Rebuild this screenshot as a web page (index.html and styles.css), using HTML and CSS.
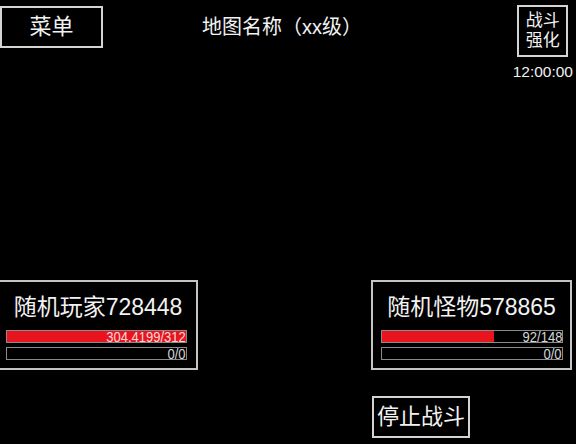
FILE: index.html
```html
<!DOCTYPE html>
<html lang="zh">
<head>
<meta charset="utf-8">
<title>战斗</title>
<link rel="stylesheet" href="styles.css">
</head>
<body>
<div class="screen">
  <div class="top">
    <div class="box menu">菜单</div>
    <div class="title">地图名称（xx级）</div>
    <div class="side">
      <div class="box boost">战斗<br>强化</div>
      <div class="time">12:00:00</div>
    </div>
  </div>
  <div class="panels">
    <div class="panel panel-left">
      <div class="name">随机玩家728448</div>
      <div class="bar"><div class="fill" style="width:100%"></div><span class="val">304.4199/312</span></div>
      <div class="bar bar-mp"><div class="fill" style="width:0%"></div><span class="val">0/0</span></div>
    </div>
    <div class="panel panel-right">
      <div class="name">随机怪物578865</div>
      <div class="bar"><div class="fill" style="width:62.16%"></div><span class="val">92/148</span></div>
      <div class="bar bar-mp"><div class="fill" style="width:0%"></div><span class="val">0/0</span></div>
    </div>
  </div>
  <div class="actions">
    <div class="box stop">停止战斗</div>
  </div>
</div>
</body>
</html>
```

FILE: styles.css
```css
* { box-sizing: border-box; }
html, body { margin: 0; padding: 0; background: #000; }
body {
  font-family: "Liberation Sans", "Noto Sans CJK SC", sans-serif;
  color: #f2f2f2;
}
.screen {
  width: 576px;
  height: 444px;
  overflow: hidden;
  display: flex;
  flex-direction: column;
}
.top {
  display: flex;
  align-items: flex-start;
}
.box {
  border: 2px solid #d4d4d4;
  display: flex;
  align-items: center;
  justify-content: center;
  text-align: center;
}
.menu {
  margin-top: 6px;
  width: 103px;
  height: 42px;
  font-size: 22px;
  line-height: 26px;
}
.title {
  margin-left: 99px;
  margin-top: 15px;
  font-size: 20px;
  line-height: 24px;
  white-space: nowrap;
}
.side {
  margin-left: auto;
  margin-right: 3px;
  margin-top: 5px;
  display: flex;
  flex-direction: column;
  align-items: center;
}
.boost {
  width: 51px;
  height: 52px;
  font-size: 17px;
  line-height: 20px;
}
.time {
  margin-top: 7px;
  font-size: 15.5px;
  line-height: 15px;
}
.panels {
  margin-top: auto;
  display: flex;
}
.panel {
  border: 2px solid #c4c4c4;
  height: 90px;
  padding-top: 12px;
}
.panel-left {
  width: 200px;
  margin-left: -2px;
  padding-left: 6px;
}
.panel-right {
  width: 201px;
  margin-left: auto;
  margin-right: 4px;
  padding-left: 8px;
}
.name {
  font-size: 23px;
  line-height: 26px;
  text-align: center;
  white-space: nowrap;
}
.panel-left .name { margin-left: -6px; width: 196px; }
.panel-right .name { margin-left: -8px; width: 197px; }
.bar {
  position: relative;
  margin-top: 10px;
  width: 181px;
  height: 13px;
  border: 1px solid #8a8a8a;
  background: #000;
  display: flex;
  justify-content: flex-end;
  align-items: center;
}
.panel-right .bar { width: 182px; }
.bar-mp { margin-top: 4px; }
.fill {
  position: absolute;
  left: 0;
  top: 0;
  bottom: 0;
  background: #e8141e;
}
.val {
  position: relative;
  font-size: 15.5px;
  line-height: 11px;
  color: rgba(255, 255, 255, 0.85);
  transform: scaleX(0.84);
  transform-origin: right center;
  white-space: nowrap;
}
.actions {
  margin-top: 26px;
  margin-bottom: 6px;
  display: flex;
  justify-content: flex-end;
  padding-right: 106px;
}
.stop {
  width: 98px;
  height: 42px;
  font-size: 22px;
  line-height: 26px;
}
```
